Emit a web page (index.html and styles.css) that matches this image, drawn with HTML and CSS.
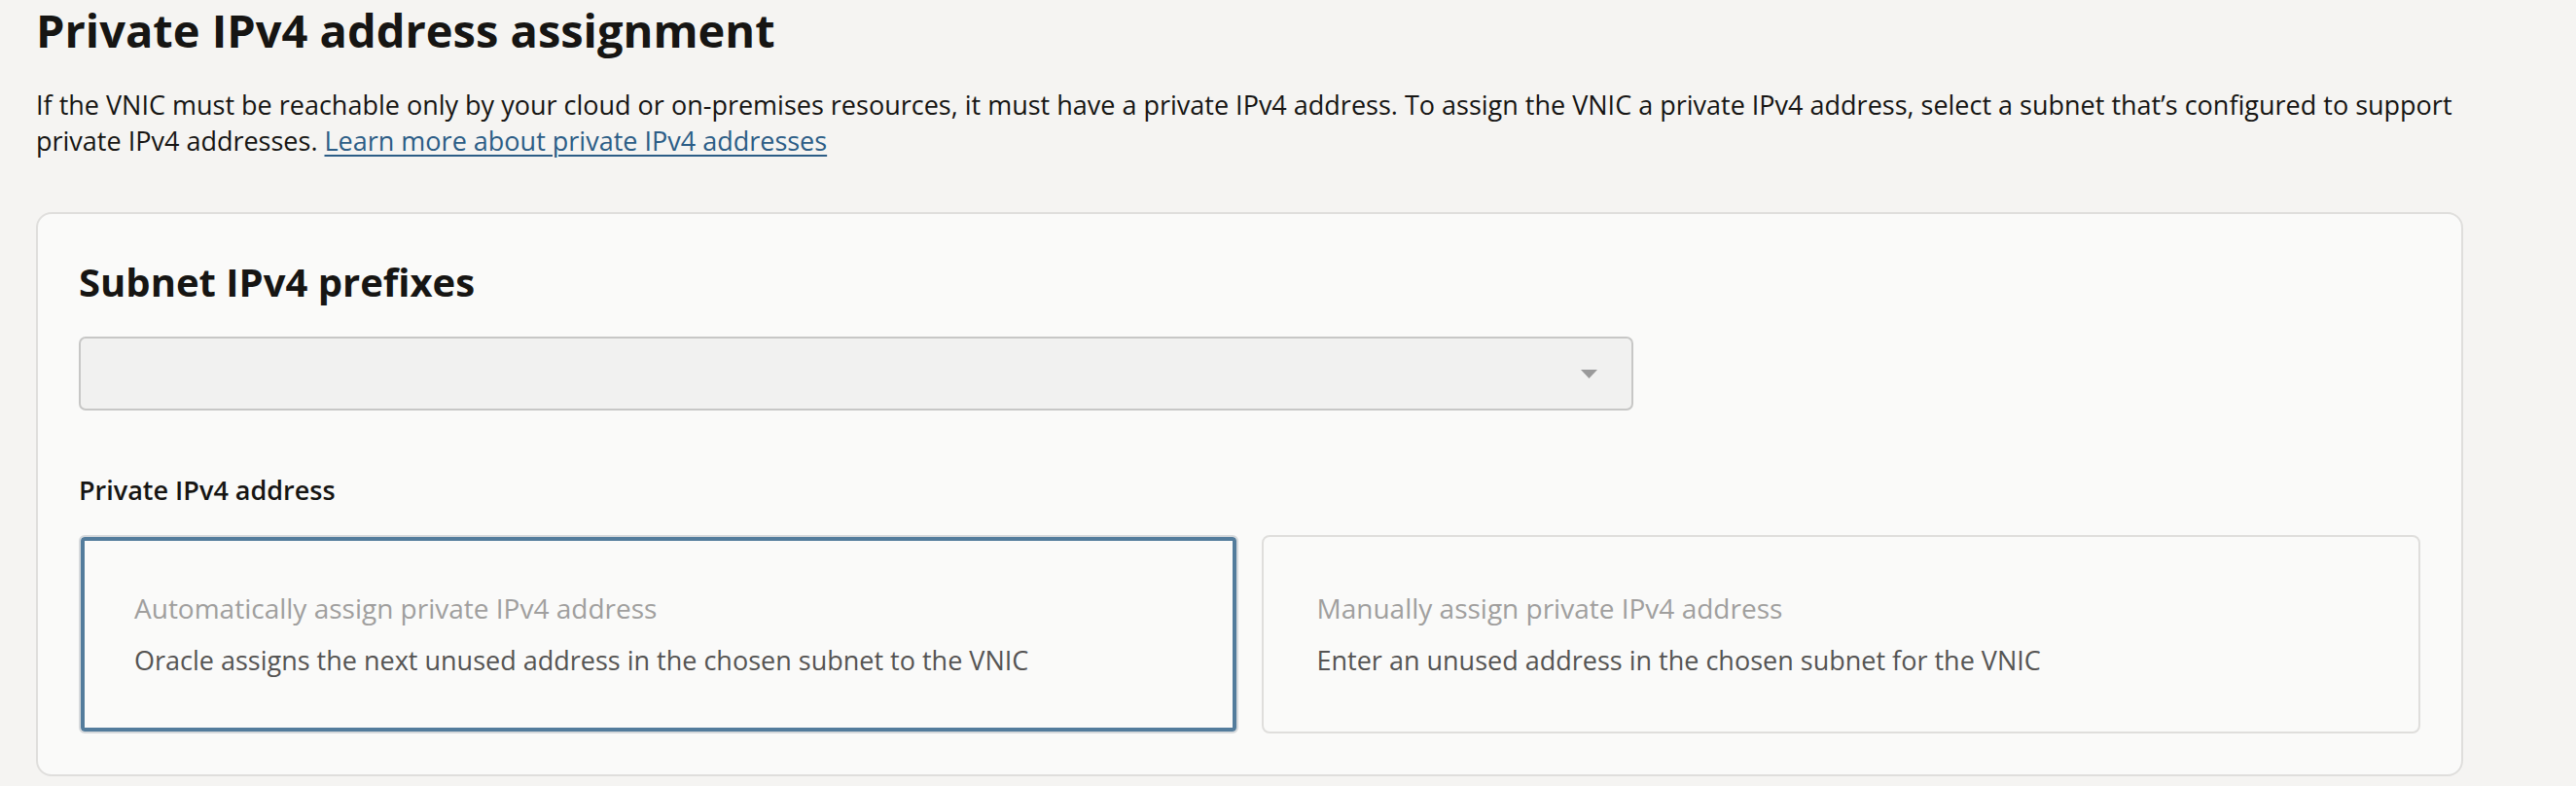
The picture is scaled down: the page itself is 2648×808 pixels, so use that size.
FILE: index.html
```html
<!DOCTYPE html>
<html lang="en">
<head>
<meta charset="utf-8">
<title>Private IPv4 address assignment</title>
<link rel="stylesheet" href="styles.css">
</head>
<body>
<main class="page">
  <h1 class="page-title">Private IPv4 address assignment</h1>
  <p class="intro"><span class="intro-part">If the VNIC must be reachable only by your cloud or on-premises resources, it must have a private IPv4 address. To assign the VNIC a private IPv4 address, select a subnet that’s configured to support</span> <span class="intro-part">private IPv4 addresses.</span> <a class="link" href="#">Learn more about private IPv4 addresses</a></p>

  <section class="card">
    <h2 class="card-title">Subnet IPv4 prefixes</h2>
    <div class="select" role="combobox" aria-expanded="false">
      <svg class="select-arrow" width="17" height="9" viewBox="0 0 17 9" aria-hidden="true"><path d="M0 0H17L8.5 9Z" fill="#9a9a9a"/></svg>
    </div>

    <div class="field-label">Private IPv4 address</div>
    <div class="options">
      <div class="option option-selected">
        <div class="option-title">Automatically assign private IPv4 address</div>
        <div class="option-desc">Oracle assigns the next unused address in the chosen subnet to the VNIC</div>
      </div>
      <div class="option">
        <div class="option-title">Manually assign private IPv4 address</div>
        <div class="option-desc">Enter an unused address in the chosen subnet for the VNIC</div>
      </div>
    </div>
  </section>
</main>
</body>
</html>
```
FILE: styles.css
```css
html, body {
  margin: 0;
  padding: 0;
}

body {
  background: #f5f4f2;
  color: #161513;
  font-family: "Open Sans", "Noto Sans", sans-serif;
  width: 2648px;
  height: 808px;
  overflow: hidden;
}

.page {
  padding: 3px 0 0 37px;
}

.page-title {
  margin: 0;
  font-size: 47px;
  line-height: 56px;
  font-weight: 700;
  color: #161513;
}

.intro {
  margin: 30px 0 0 0;
  width: 2553px;
  font-size: 27px;
  line-height: 37px;
  color: #161513;
}

.link {
  color: #2c5d86;
  text-decoration: underline;
  text-underline-offset: 4px;
  text-decoration-thickness: 2px;
}

.card {
  margin-top: 55px;
  width: 2495px;
  box-sizing: border-box;
  background: #fafaf9;
  border: 2px solid #dfdedc;
  border-radius: 16px;
  padding: 44px 42px 42px 42px;
}

.card-title {
  margin: 0;
  font-size: 40px;
  line-height: 52px;
  font-weight: 700;
  color: #161513;
}

.select {
  margin-top: 30px;
  width: 1598px;
  height: 76px;
  box-sizing: border-box;
  background: #f1f1f0;
  border: 2px solid #c7c7c6;
  border-radius: 7px;
  display: flex;
  align-items: center;
  justify-content: flex-end;
  padding-right: 35px;
}

.select-arrow {
  display: block;
}

.field-label {
  margin-top: 64px;
  font-size: 27px;
  line-height: 36px;
  font-weight: 600;
  color: #161513;
}

.options {
  margin-top: 28px;
  display: grid;
  grid-template-columns: 1fr 1fr;
  gap: 24px;
}

.option {
  height: 204px;
  box-sizing: border-box;
  border: 2px solid #dfdedc;
  border-radius: 8px;
  background: #fafaf9;
  padding: 55px 55px;
  display: flex;
  flex-direction: column;
  gap: 18px;
}

.option-selected {
  border-color: #d6d9dc;
  box-shadow: inset 0 0 0 4px #537c9c;
  border-radius: 6px;
}

.option-title {
  font-size: 28px;
  line-height: 36px;
  color: #a09f9e;
  white-space: nowrap;
}

.option-desc {
  font-size: 27px;
  line-height: 36px;
  color: #555453;
  white-space: nowrap;
}
```
